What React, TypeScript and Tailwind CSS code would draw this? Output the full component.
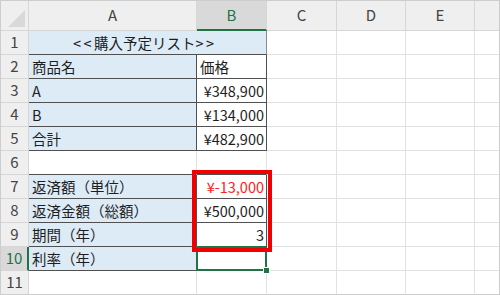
import React from 'react';

type Row = {
  n: number;
  a?: string;
  b?: string;
  merged?: boolean;
  boxed?: boolean;
  red?: boolean;
  bLeft?: boolean;
  selected?: boolean;
  aboveBox?: boolean;
};

const rows: Row[] = [
  { n: 1, a: '購入予定リスト', merged: true },
  { n: 2, a: '商品名', b: '価格', bLeft: true, boxed: true },
  { n: 3, a: 'A', b: '¥348,900', boxed: true },
  { n: 4, a: 'B', b: '¥134,000', boxed: true },
  { n: 5, a: '合計', b: '¥482,900', boxed: true },
  { n: 6, aboveBox: true },
  { n: 7, a: '返済額（単位）', b: '¥-13,000', red: true, boxed: true },
  { n: 8, a: '返済金額（総額）', b: '¥500,000', boxed: true },
  { n: 9, a: '期間（年）', b: '3', boxed: true },
  { n: 10, a: '利率（年）', b: '', boxed: true, selected: true },
  { n: 11 },
];

const font = { fontFamily: '"Noto Sans CJK JP", "Noto Sans", sans-serif' };

export default function App() {
  return (
    <div
      className="relative w-[500px] h-[295px] overflow-hidden bg-white border border-[#cdcdcd] text-[14.5px] text-[#1e1e1e]"
      style={font}
    >
      <div className="grid grid-cols-[28px_168px_70px_70px_69px_69px_1fr] grid-rows-[30px_repeat(11,24px)]">
        {/* header row */}
        <div className="relative bg-[#efefef] border-r border-b border-[#d6d6d6]">
          <svg className="absolute right-[3px] bottom-[3px]" width="17" height="17" viewBox="0 0 17 17">
            <polygon points="17,0 17,17 0,17" fill="#d9d9d9" />
          </svg>
        </div>
        <div className="flex items-center justify-center bg-[#efefef] border-r border-b border-[#d6d6d6] text-[15px] text-[#444]">A</div>
        <div className="flex items-center justify-center bg-[#d9d9d9] border-r border-[#d6d6d6] border-b-2 border-b-[#217346] text-[15px] text-[#217346]">B</div>
        <div className="flex items-center justify-center bg-[#efefef] border-r border-b border-[#d6d6d6] text-[15px] text-[#444]">C</div>
        <div className="flex items-center justify-center bg-[#efefef] border-r border-b border-[#d6d6d6] text-[15px] text-[#444]">D</div>
        <div className="flex items-center justify-center bg-[#efefef] border-r border-b border-[#d6d6d6] text-[15px] text-[#444]">E</div>
        <div className="bg-[#efefef] border-b border-[#d6d6d6]"></div>

        {rows.map((r) => (
          <React.Fragment key={r.n}>
            <div
              className={
                r.selected
                  ? 'flex items-center justify-center bg-[#d9d9d9] border-b border-[#d6d6d6] border-r-2 border-r-[#217346] text-[15px] text-[#217346]'
                  : 'flex items-center justify-center bg-[#efefef] border-r border-b border-[#d6d6d6] text-[15px] text-[#444]'
              }
            >
              {r.n}
            </div>

            {r.merged ? (
              <div className="col-span-2 flex items-center justify-center pr-[8px] bg-[#ddebf7] border-r border-r-[#8c8c8c] border-b border-b-[#505050] whitespace-nowrap">
                <span className="tracking-[2.5px]">&lt;&lt;</span>
                {r.a}
                <span className="tracking-[2.5px] -mr-[2.5px]">&gt;&gt;</span>
              </div>
            ) : r.boxed ? (
              <>
                <div className="flex items-center pl-[3px] bg-[#ddebf7] border-r border-b border-[#505050] whitespace-nowrap">
                  {r.a}
                </div>
                <div
                  className={
                    'relative flex items-center border-r border-b border-[#505050] whitespace-nowrap ' +
                    (r.bLeft ? 'justify-start pl-[3px]' : 'justify-end pr-[2px]') +
                    (r.red ? ' text-[#ff2020]' : '')
                  }
                >
                  {r.b}
                  {r.selected && (
                    <>
                      <div className="absolute -left-px -top-px -right-px -bottom-px border-2 border-[#217346]"></div>
                      <div className="absolute -right-[4px] -bottom-[4px] w-[7px] h-[7px] bg-[#217346] border border-white"></div>
                    </>
                  )}
                </div>
              </>
            ) : r.aboveBox ? (
              <>
                <div className="border-r border-r-[#e1e1e1] border-b border-b-[#505050]"></div>
                <div className="border-r border-r-[#e1e1e1] border-b border-b-[#505050]"></div>
              </>
            ) : (
              <>
                <div className="border-r border-b border-[#e1e1e1]"></div>
                <div className="border-r border-b border-[#e1e1e1]"></div>
              </>
            )}

            <div className="border-r border-b border-[#e1e1e1]"></div>
            <div className="border-r border-b border-[#e1e1e1]"></div>
            <div className="border-r border-b border-[#e1e1e1]"></div>
            <div className="border-b border-[#e1e1e1]"></div>
          </React.Fragment>
        ))}
      </div>

      {/* red annotation box */}
      <div className="absolute left-[191px] top-[169px] w-[80px] h-[82px] border-4 border-[#f00000]"></div>
    </div>
  );
}
